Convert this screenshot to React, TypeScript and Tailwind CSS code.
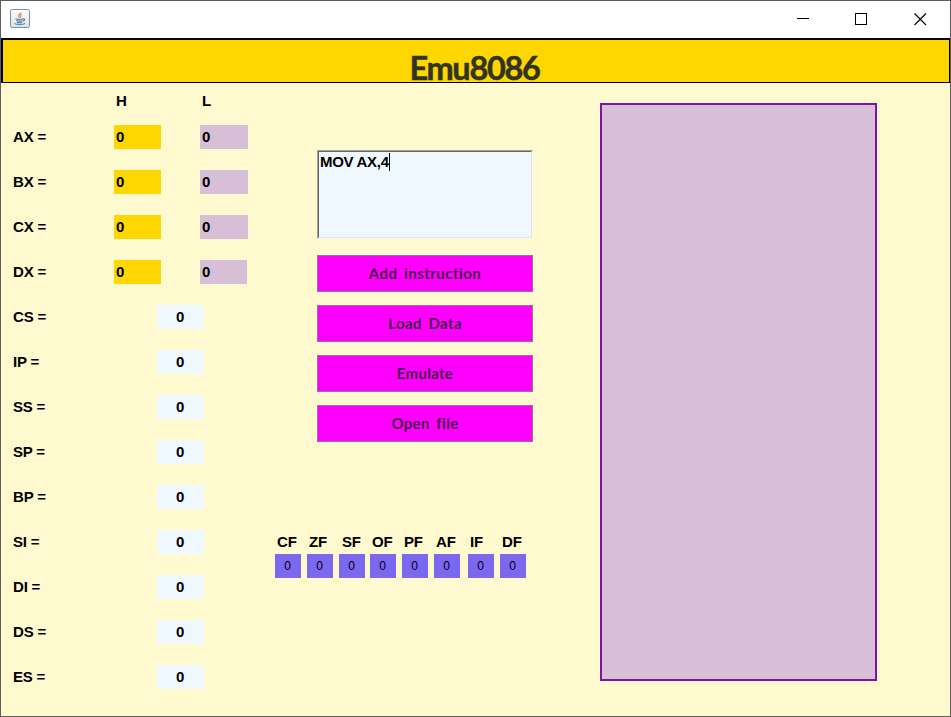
import React from "react";

const pairs = [
  { name: "AX", low: "w-12" },
  { name: "BX", low: "w-12" },
  { name: "CX", low: "w-12" },
  { name: "DX", low: "w-[47px]" },
];

const registers = ["CS", "IP", "SS", "SP", "BP", "SI", "DI", "DS", "ES"];

const flags = [
  { name: "CF", gap: "ml-0", shift: "pl-[2px]" },
  { name: "ZF", gap: "ml-[6px]", shift: "pl-[2px]" },
  { name: "SF", gap: "ml-[6px]", shift: "pl-[3px]" },
  { name: "OF", gap: "ml-[5px]", shift: "pl-[2px]" },
  { name: "PF", gap: "ml-[6px]", shift: "pl-[2px]" },
  { name: "AF", gap: "ml-[6px]", shift: "pl-[2px]" },
  { name: "IF", gap: "ml-[8px]", shift: "pl-[2px]" },
  { name: "DF", gap: "ml-[6px]", shift: "pl-[2px]" },
];

const actions = [
  { label: "Add instruction", spacing: "tracking-[0.45px]" },
  { label: "Load Data", spacing: "tracking-[0.4px]" },
  { label: "Emulate", spacing: "tracking-[0.3px]" },
  { label: "Open file", spacing: "tracking-[0.35px]" },
];

function JavaIcon() {
  return (
    <svg width="20" height="19" viewBox="0 0 20 19" fill="none">
      <defs>
        <linearGradient id="tile" x1="0" y1="0" x2="0" y2="1">
          <stop offset="0" stopColor="#ffffff" />
          <stop offset="1" stopColor="#d9e1e6" />
        </linearGradient>
      </defs>
      <rect x="0.5" y="0.5" width="19" height="18" rx="1.8" fill="url(#tile)" stroke="#7591a8" />
      <path d="M10.8 3.2c.6 1.7-3 2.5-2.4 4 .2.7 1 .9 1 1.7M11.9 5.3c-1.8.8-2 1.4-1.2 2.3.3.5 0 .9-.4 1.3" stroke="#e58a4b" strokeWidth="1.2" />
      <path d="M5.5 9.8c1.8.7 6 .6 8 0M6.2 11.6c1.8.6 4.8.6 6.4.1M7 13.3c1.4.5 3.8.5 5 0M13 10c2.4-.7 2.3 1.5-.1 2" stroke="#547e9e" strokeWidth="1.1" />
      <path d="M4.5 14.6c2.5 1.3 8.6 1.1 10.5-.1" stroke="#547e9e" />
    </svg>
  );
}

export default function App() {
  return (
    <div className="flex h-[717px] w-[951px] flex-col overflow-hidden border border-[#5f5e5c] bg-[#fef9ce] font-['Liberation_Sans',Arial,sans-serif] text-[15px] leading-4 font-bold tracking-[-0.2px] text-black">
      <div className="flex h-[37px] shrink-0 justify-between bg-white">
        <div className="pt-2 pl-[9px]">
          <JavaIcon />
        </div>
        <div className="flex gap-[46px] pt-[11px] pr-[23px]">
          <svg width="13" height="13" viewBox="0 0 13 13" shapeRendering="crispEdges">
            <path d="M1 6.5h12" stroke="#000" />
          </svg>
          <svg width="13" height="13" viewBox="0 0 13 13" fill="none" shapeRendering="crispEdges">
            <path d="M.5 1.5h11v11H.5z" stroke="#000" />
          </svg>
          <svg width="13" height="14" viewBox="0 0 13 14">
            <path d="M.5 1.5l11.5 11.5M12 1.5L.5 13" stroke="#000" strokeWidth="1.1" />
          </svg>
        </div>
      </div>

      <header className="flex h-[45px] shrink-0 justify-center border-t-2 border-r border-b border-l-2 border-black bg-[#ffd700] pt-[14px] pr-[3px]">
        <h1 className="font-['Comic_Sans_MS',Lato,sans-serif] text-[32.5px] leading-[28px] font-bold tracking-[-1.3px] text-[#333322] [-webkit-text-stroke:0.5px_#333322]">
          Emu8086
        </h1>
      </header>

      <main className="flex min-h-0 flex-1">
        <section className="w-[274px] shrink-0 pt-[10px] pl-3">
          <div className="flex h-4">
            <span className="ml-[103px] w-[86px]">H</span>
            <span>L</span>
          </div>
          <div className="mt-4 flex flex-col gap-[21px]">
            {pairs.map((p) => (
              <div key={p.name} className="flex h-6 items-center">
                <span className="w-[101px]">{p.name} =</span>
                <span className="flex h-6 w-[47px] items-center bg-[#ffd700] pl-[2px]">0</span>
                <span className={`ml-[39px] flex h-6 items-center bg-[#d8bfd8] pl-[2px] ${p.low}`}>0</span>
              </div>
            ))}
            {registers.map((name) => (
              <div key={name} className="flex h-6 items-center">
                <span className="w-[144px]">{name} =</span>
                <span className="flex h-6 w-[47px] items-center justify-center bg-[#f0f8ff] pr-px">0</span>
              </div>
            ))}
          </div>
        </section>

        <section className="w-[325px] shrink-0 pt-[67px]">
          <div className="ml-[42px] h-[89px] w-[216px] border border-t-[#a09f98] border-r-[#f9f8f2] border-b-[#f9f8f2] border-l-[#a09f98]">
            <div className="flex h-full items-start border border-t-[#62666a] border-r-[#dfe4e6] border-b-[#dfe4e6] border-l-[#62666a] bg-[#f0f8ff] pl-px">
              <span className="mt-[2px] w-[69px] tracking-[-0.3px] whitespace-nowrap">MOV AX,4</span>
              <span className="mt-[1px] h-[18px] w-px bg-black" />
            </div>
          </div>
          <div className="mt-4 ml-[42px] flex w-[216px] flex-col gap-[13px]">
            {actions.map((a) => (
              <button
                key={a.label}
                className={`h-[37px] border border-[#98709b] bg-[#ff00ff] pb-[2px] font-['Comic_Sans_MS',Lato,sans-serif] text-[15px] font-bold text-[#4a1a4a] [word-spacing:2.5px] ${a.spacing}`}
              >
                {a.label}
              </button>
            ))}
          </div>
          <div className="mt-[92px] flex">
            {flags.map((f) => (
              <div key={f.name} className={`w-[26px] shrink-0 ${f.gap}`}>
                <div className={`h-5 whitespace-nowrap ${f.shift}`}>{f.name}</div>
                <div className="flex h-6 items-center justify-center bg-[#7b68ee] pr-px text-[12px] font-normal">0</div>
              </div>
            ))}
          </div>
        </section>

        <section className="mt-5 h-[578px] w-[277px] border-2 border-[#8210a4] bg-[#d8bfd8]" />
      </main>
    </div>
  );
}
